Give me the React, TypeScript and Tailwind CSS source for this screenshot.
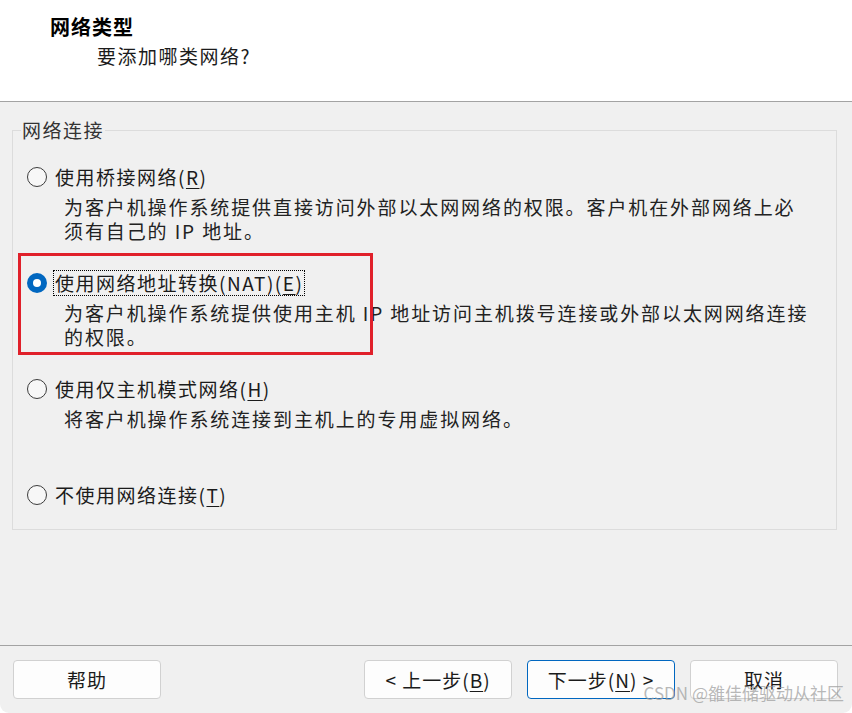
const options = [
  {
    key: "R",
    label: "使用桥接网络",
    desc: [
      "为客户机操作系统提供直接访问外部以太网网络的权限。客户机在外部网络上必",
      "须有自己的 IP 地址。",
    ],
  },
  {
    key: "E",
    label: "使用网络地址转换(NAT)",
    desc: [
      "为客户机操作系统提供使用主机 IP 地址访问主机拨号连接或外部以太网网络连接",
      "的权限。",
    ],
    checked: true,
  },
  {
    key: "H",
    label: "使用仅主机模式网络",
    desc: ["将客户机操作系统连接到主机上的专用虚拟网络。"],
  },
  { key: "T", label: "不使用网络连接", desc: [] },
];

function Radio({ checked }: { checked?: boolean }) {
  if (checked) {
    return (
      <span className="flex h-[20px] w-[20px] shrink-0 items-center justify-center rounded-full bg-[#0067c0]">
        <span className="h-[8px] w-[8px] rounded-full bg-white" />
      </span>
    );
  }
  return (
    <span className="h-[20px] w-[20px] shrink-0 rounded-full border-[1.5px] border-[#3c3c3c] bg-[#f7f7f7]" />
  );
}

function Button({
  children,
  primary,
}: {
  children: React.ReactNode;
  primary?: boolean;
}) {
  return (
    <button
      className={
        "flex h-[39px] w-[148px] items-center justify-center rounded-[4px] border bg-[#fdfdfd] text-[19px] leading-[24px] tracking-[1px] text-[#1b1b1b] " +
        (primary ? "border-[#0067c0]" : "border-[#d1d1d1]")
      }
    >
      {children}
    </button>
  );
}

export default function App() {
  return (
    <div className="relative flex h-[713px] w-[852px] flex-col overflow-hidden rounded-b-[9px] bg-[#f0f0f0] font-['Noto_Sans_CJK_SC',sans-serif] text-[#1b1b1b]">
      {/* header */}
      <div className="h-[102px] shrink-0 border-b border-[#a3a3a3] bg-white pl-[50px] pt-[14px]">
        <div className="text-[20px] font-bold leading-[26px] tracking-[1px] text-black">
          网络类型
        </div>
        <div className="mt-[3px] pl-[47px] text-[19px] leading-[26px] tracking-[1.5px]">
          要添加哪类网络?
        </div>
      </div>

      {/* body */}
      <div className="flex-1 px-[12px] pt-[16px]">
        <fieldset className="h-[412px] w-[825px] border border-[#dcdcdc]">
          <legend className="ml-[8px] px-[1px] text-[19px] leading-[24px] tracking-[1.5px] text-[#333]">
            网络连接
          </legend>
          <div className="flex flex-col pt-[23px]">
            {options.map((o) => (
              <div key={o.key} className="relative h-[106px] px-[14px]">
                {o.checked && (
                  <div className="pointer-events-none absolute left-[5px] top-[-18px] h-[102px] w-[355px] border-[3px] border-[#e0202a]" />
                )}
                <div className="flex h-[24px] items-center gap-[6px]">
                  <Radio checked={o.checked} />
                  <span
                    className={
                      "whitespace-nowrap text-[19px] leading-[22px] tracking-[1.5px] " +
                      (o.checked
                        ? "border border-dotted border-black px-[1px] py-[1px]"
                        : "px-[2px]")
                    }
                  >
                    {o.label}(<span className="underline underline-offset-[3px]">{o.key}</span>)
                  </span>
                </div>
                <div className="mt-[6px] pl-[37px]">
                  {o.desc.map((d) => (
                    <div
                      key={d}
                      className="whitespace-nowrap text-[19px] leading-[24px] tracking-[1.9px] text-[#222]"
                    >
                      {d}
                    </div>
                  ))}
                </div>
              </div>
            ))}
          </div>
        </fieldset>
      </div>

      {/* footer */}
      <div className="flex h-[68px] shrink-0 items-start justify-between border-t border-[#a3a3a3] px-[13px] pt-[14px] pr-[14px]">
        <Button>帮助</Button>
        <div className="flex gap-[15px]">
          <Button>
            &lt; 上一步(<span className="underline underline-offset-[3px]">B</span>)
          </Button>
          <Button primary>
            下一步(<span className="underline underline-offset-[3px]">N</span>) &gt;
          </Button>
          <Button>取消</Button>
        </div>
      </div>

      {/* watermark */}
      <div className="pointer-events-none absolute bottom-[10px] right-[8px] whitespace-nowrap text-[17px] leading-[20px] text-[#9a9a9a]/70">
        CSDN @雒佳储驱动从社区
      </div>
    </div>
  );
}
